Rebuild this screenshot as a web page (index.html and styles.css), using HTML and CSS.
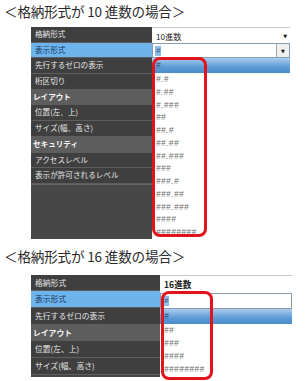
FILE: index.html
```html
<!DOCTYPE html>
<html lang="ja">
<head>
<meta charset="utf-8">
<link rel="stylesheet" href="styles.css">
</head>
<body>
<div class="page">
  <div class="title t1">＜格納形式が 10 進数の場合＞</div>
  <div class="panel p1">
    <div class="labels">
      <div class="row">格納形式</div>
      <div class="row sel">表示形式</div>
      <div class="row">先行するゼロの表示</div>
      <div class="row">桁区切り</div>
      <div class="row head">レイアウト</div>
      <div class="row">位置(左、上)</div>
      <div class="row">サイズ(幅、高さ)</div>
      <div class="row head">セキュリティ</div>
      <div class="row">アクセスレベル</div>
      <div class="row">表示が許可されるレベル</div>
      <div class="fill"></div>
    </div>
    <div class="values">
      <div class="vrow"><span class="vtext">10進数</span><span class="arrow">▼</span></div>
      <div class="vinput"><span class="hl">#</span><span class="btn"><span class="arrow">▼</span></span></div>
      <div class="list">
        <div class="item first">#</div>
        <div class="item">#.#</div>
        <div class="item">#.##</div>
        <div class="item">#.###</div>
        <div class="item">##</div>
        <div class="item">##.#</div>
        <div class="item">##.##</div>
        <div class="item">##.###</div>
        <div class="item">###</div>
        <div class="item">###.#</div>
        <div class="item">###.##</div>
        <div class="item">###.###</div>
        <div class="item">####</div>
        <div class="item">########</div>
      </div>
      <div class="redbox"></div>
    </div>
  </div>
  <div class="title t2">＜格納形式が 16 進数の場合＞</div>
  <div class="panel p2">
    <div class="labels">
      <div class="row">格納形式</div>
      <div class="row sel">表示形式</div>
      <div class="row">先行するゼロの表示</div>
      <div class="row head">レイアウト</div>
      <div class="row">位置(左、上)</div>
      <div class="row">サイズ(幅、高さ)</div>
    </div>
    <div class="values">
      <div class="vrow"><span class="vtext bold">16進数</span></div>
      <div class="vinput"><span class="hl">#</span></div>
      <div class="list">
        <div class="item first">#</div>
        <div class="item">##</div>
        <div class="item">###</div>
        <div class="item">####</div>
        <div class="item">########</div>
      </div>
      <div class="redbox"></div>
    </div>
  </div>
</div>
</body>
</html>
```
FILE: styles.css
```css
html, body {
  margin: 0;
  padding: 0;
  background: #ffffff;
}
body {
  width: 307px;
  height: 381px;
  overflow: hidden;
  font-family: "Noto Sans CJK JP", "Noto Sans", sans-serif;
}
.page {
  display: flex;
  flex-direction: column;
}
.title {
  height: 27px;
  padding-left: 4px;
  font-size: 13.6px;
  line-height: 22px;
  color: #2a2a2a;
  letter-spacing: -0.2px;
  white-space: nowrap;
}
.t2 {
  height: 36px;
  line-height: 34px;
}
.panel {
  display: flex;
  margin-left: 31px;
}
.labels {
  display: flex;
  flex-direction: column;
  background: #474747;
}
.p1 .labels { width: 121px; }
.p2 .labels { width: 129px; }
.row {
  box-sizing: border-box;
  height: 15.7px;
  border-bottom: 1.5px solid #5e5e5e;
  background: #3f3f3f;
  color: #e6e6e6;
  font-size: 7.6px;
  line-height: 14px;
  padding-left: 4px;
  white-space: nowrap;
}
.p2 .row {
  height: 16.67px;
  line-height: 15px;
  font-size: 7.8px;
}
.row.sel {
  background: #6db3ec;
  color: #173a5c;
  border-bottom-color: #5e5e5e;
}
.row.head {
  background: #5d5d5d;
  color: #f4f4f4;
  font-weight: bold;
  padding-left: 2px;
  border-bottom-color: #5d5d5d;
}
.fill {
  height: 53px;
  background: #474747;
  border-top: 1px solid #666;
}
.values {
  position: relative;
  display: flex;
  flex-direction: column;
}
.p1 .values { width: 138px; }
.p2 .values { width: 132px; }
.vrow {
  box-sizing: border-box;
  height: 16px;
  border-top: 1px solid #c8c8c8;
  display: flex;
  align-items: center;
  justify-content: space-between;
  padding: 0 3px 0 4px;
}
.p2 .vrow { height: 18px; }
.vtext {
  font-size: 8.2px;
  color: #222;
}
.vtext.bold {
  font-weight: bold;
  font-size: 8.6px;
}
.arrow {
  font-size: 5px;
  color: #111;
  font-family: "DejaVu Sans", sans-serif;
}
.vinput {
  box-sizing: border-box;
  height: 15px;
  border: 1px solid #8a9bb0;
  background: #fff;
  display: flex;
  align-items: center;
  justify-content: space-between;
  padding-left: 2px;
}
.p2 .vinput { height: 16px; }
.hl {
  background: #8ebde8;
  color: #3a5a80;
  font-size: 8px;
  font-style: italic;
  font-family: "Liberation Sans", sans-serif;
  padding: 0 1px;
  line-height: 10px;
}
.btn {
  box-sizing: border-box;
  width: 13px;
  height: 13px;
  border-left: 1px solid #9aa8b8;
  background: #f0f0f0;
  display: flex;
  align-items: center;
  justify-content: center;
}
.list {
  display: flex;
  flex-direction: column;
  background: #fff;
}
.item {
  height: 12.75px;
  line-height: 12.75px;
  padding-left: 4px;
  font-family: "Liberation Sans", sans-serif;
  font-style: italic;
  font-size: 8.4px;
  color: #6c6c6c;
  letter-spacing: 0.4px;
}
.p2 .item {
  height: 13.2px;
  line-height: 13.2px;
}
.item.first {
  height: 15px;
  line-height: 15px;
  background: linear-gradient(#a9cdef, #5d9bd6 60%, #4a8ccb);
  color: #2b4c72;
}
.p2 .item.first {
  height: 15px;
  line-height: 15px;
}
.redbox {
  position: absolute;
  box-sizing: border-box;
  border: 3px solid #e3131b;
  border-radius: 8px;
}
.p1 .redbox {
  left: 0;
  top: 30px;
  width: 55px;
  height: 180px;
}
.p2 .redbox {
  left: 1px;
  top: 16px;
  width: 52px;
  height: 89px;
}
```
